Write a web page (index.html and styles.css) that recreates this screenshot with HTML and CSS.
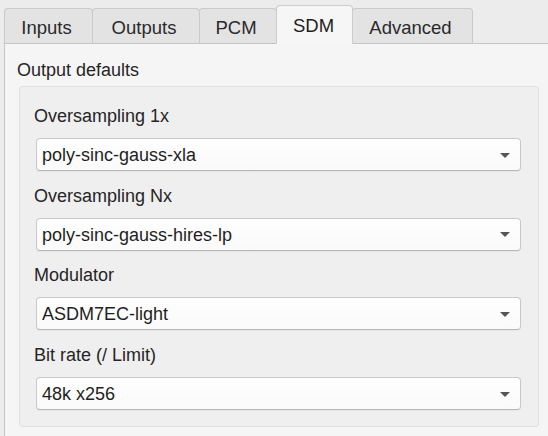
FILE: index.html
```html
<!DOCTYPE html>
<html>
<head>
<meta charset="utf-8">
<link rel="stylesheet" href="styles.css">
</head>
<body>
<div class="window">
  <div class="tabbar">
    <div class="tab t-inputs">Inputs</div>
    <div class="tab t-outputs">Outputs</div>
    <div class="tab t-pcm">PCM</div>
    <div class="tab t-sdm active">SDM</div>
    <div class="tab t-adv">Advanced</div>
  </div>
  <div class="pane">
    <div class="group-title">Output defaults</div>
    <div class="group">
      <div class="row">
        <div class="label">Oversampling 1x</div>
        <div class="combo"><span>poly-sinc-gauss-xla</span><span class="arrow"></span></div>
      </div>
      <div class="row">
        <div class="label">Oversampling Nx</div>
        <div class="combo"><span>poly-sinc-gauss-hires-lp</span><span class="arrow"></span></div>
      </div>
      <div class="row">
        <div class="label">Modulator</div>
        <div class="combo"><span>ASDM7EC-light</span><span class="arrow"></span></div>
      </div>
      <div class="row">
        <div class="label">Bit rate (/ Limit)</div>
        <div class="combo"><span>48k x256</span><span class="arrow"></span></div>
      </div>
    </div>
  </div>
</div>
</body>
</html>
```
FILE: styles.css
```css
html, body {
  margin: 0;
  padding: 0;
  overflow: hidden;
  background: #ececec;
  width: 548px;
  height: 436px;
}
.window {
  padding: 6px 0 0 4px;
  font-family: "Liberation Sans", Arial, sans-serif;
  font-size: 18px;
  color: #262626;
}
.tabbar {
  display: flex;
  align-items: flex-end;
  height: 38px;
  position: relative;
  z-index: 1;
  margin-bottom: -1px;
}
.tab {
  box-sizing: border-box;
  height: 36px;
  background: #e4e3e4;
  border: 1px solid #cbcacb;
  border-bottom: 1px solid #c6c5c6;
  border-radius: 4px 4px 0 0;
  margin-right: -1px;
  display: flex;
  align-items: center;
  justify-content: center;
  padding-top: 4px;
  padding-right: 4px;
  font-size: 18.5px;
  color: #2a2a2a;
}
.t-inputs { width: 89px; }
.t-outputs { width: 108px; }
.t-pcm { width: 78px; }
.t-sdm { width: 77px; }
.t-adv { width: 121px; }
.tab.active {
  height: 39px;
  background: #f7f6f7;
  border-color: #cdcccd;
  border-bottom-color: #f7f6f7;
  position: relative;
  z-index: 2;
  padding-top: 2px;
  padding-right: 2px;
  color: #1e1e1e;
}
.pane {
  box-sizing: border-box;
  width: 552px;
  height: 400px;
  background: #f6f5f6;
  border: 1px solid #c6c5c6;
  border-right: none;
  padding: 15px 0 0 0;
}
.group-title {
  line-height: 22px;
  padding-left: 12px;
}
.group {
  box-sizing: border-box;
  margin: 5px 0 0 14px;
  width: 520px;
  height: 341px;
  background: #f0eff0;
  border: 1px solid #e2e1e2;
  border-radius: 3px;
  padding: 18px 17px 0 16px;
  display: flex;
  flex-direction: column;
  gap: 13.7px;
}
.label {
  line-height: 22px;
  margin-left: -2px;
  margin-bottom: 11px;
  color: #252525;
}
.combo {
  box-sizing: border-box;
  height: 33px;
  background: linear-gradient(#fefefe, #fbfafb);
  border: 1px solid #c9c8c9;
  border-bottom-color: #b9b8b9;
  border-radius: 4px;
  box-shadow: 0 1px 0 rgba(0,0,0,0.04);
  display: flex;
  align-items: center;
  justify-content: space-between;
  padding: 2px 10px 0 5px;
  color: #1f1f1f;
}
.arrow {
  width: 0;
  height: 0;
  border-left: 5px solid transparent;
  border-right: 5px solid transparent;
  border-top: 5px solid #555;
  margin-top: -1px;
}
```
